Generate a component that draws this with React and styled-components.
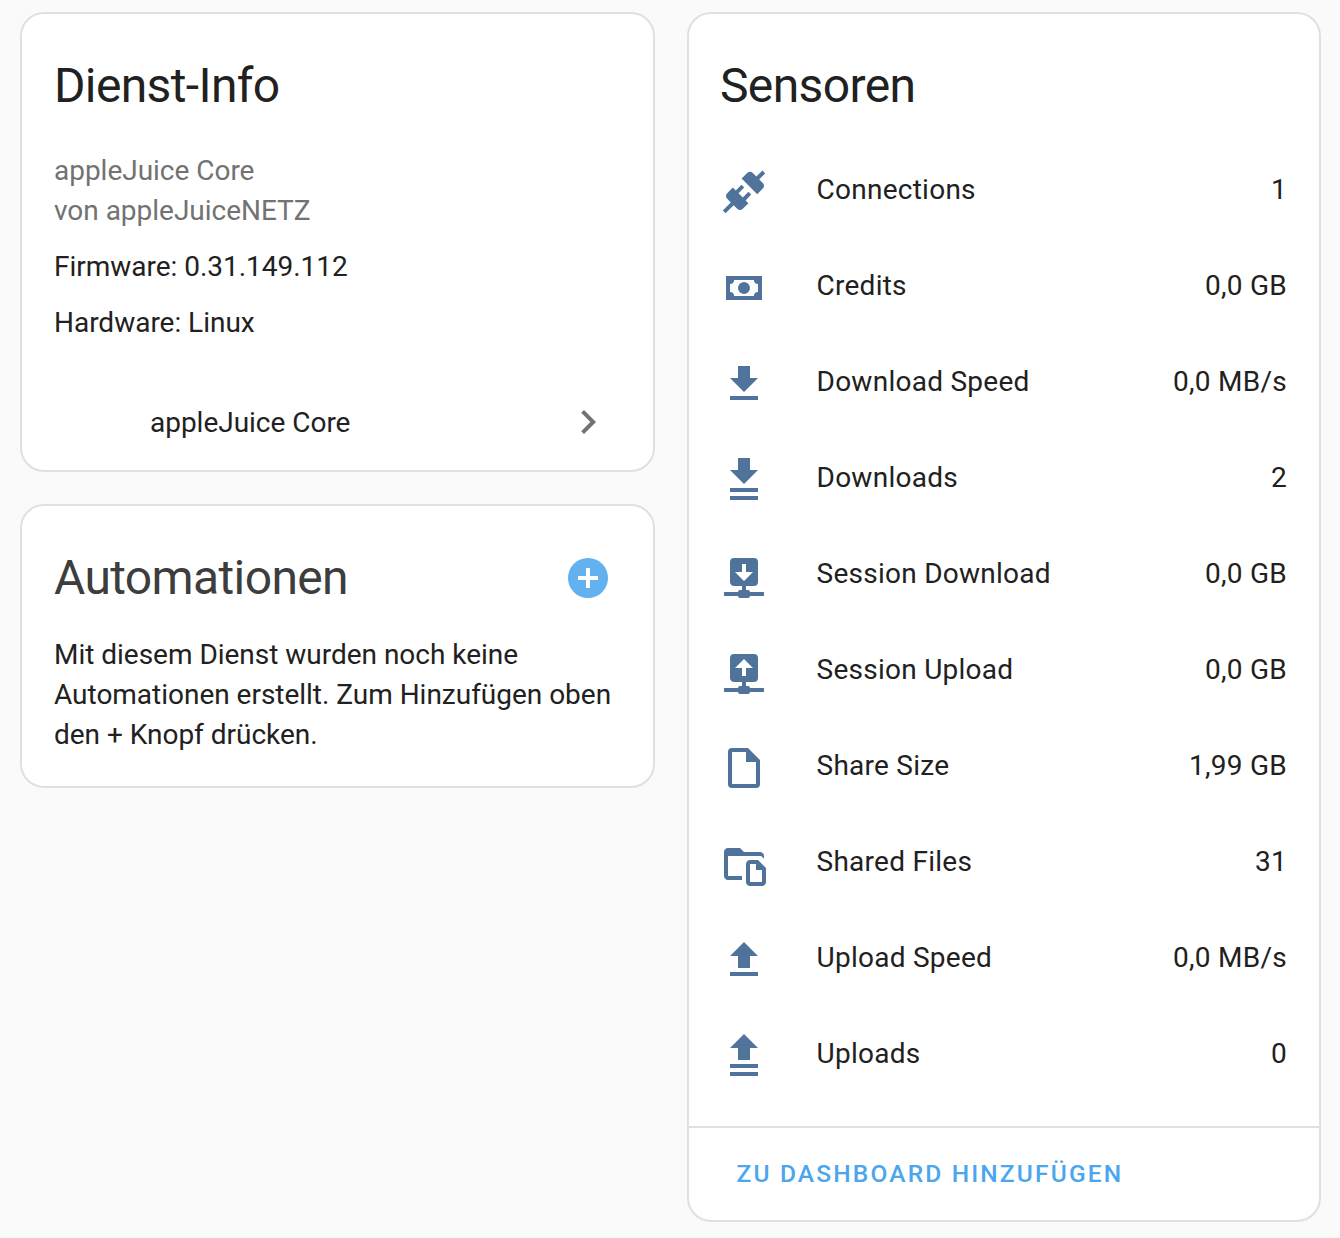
import React from "react";
import styled, { createGlobalStyle } from "styled-components";

const GlobalStyle = createGlobalStyle`
  *, *::before, *::after { box-sizing: border-box; }
  body {
    margin: 0;
    background: #fafafa;
    color: #212121;
    font-family: Roboto, "Noto Sans", sans-serif;
    font-size: 28px;
    line-height: 40px;
    letter-spacing: -0.02px;
    -webkit-font-smoothing: antialiased;
  }
`;

const Page = styled.main`
  display: flex;
  align-items: flex-start;
  gap: 32px;
  width: 1340px;
  min-height: 1238px;
  padding: 12px 19px 16px 20px;
`;

const Column = styled.div`
  display: flex;
  flex-direction: column;
  gap: 32px;
  width: ${(p) => p.$width}px;
`;

const Card = styled.section`
  display: flex;
  flex-direction: column;
  height: ${(p) => p.$height}px;
  background: #fff;
  border: 2px solid #e0e0e0;
  border-radius: 24px;
`;

const CardHeader = styled.header`
  display: flex;
  align-items: center;
  justify-content: space-between;
  height: 144px;
  padding: 0 41px 0 ${(p) => p.$inset || 32}px;
  opacity: ${(p) => (p.$dimmed ? 0.87 : 1)};
`;

const Title = styled.h1`
  margin: 0;
  font-size: 48px;
  font-weight: 400;
  line-height: 96px;
  letter-spacing: -0.63px;
`;

const InfoBody = styled.div`
  display: flex;
  flex-direction: column;
  gap: 16px;
  padding: 0 32px;
  margin-top: -7px;
`;

const Manufacturer = styled.div`
  color: #727272;
`;

const DeviceLink = styled.a`
  display: flex;
  align-items: center;
  justify-content: space-between;
  height: 96px;
  margin-top: 31px;
  padding: 0 41px 0 128px;
`;

const DeviceName = styled.span`
  padding-top: 2px;
`;

const BodyText = styled.p`
  margin: -15px 0 0;
  padding: 0 32px;
`;

const IconButton = styled.button`
  display: flex;
  padding: 0;
  border: 0;
  background: none;
  color: #4ba6ee;
`;

const Svg = styled.svg`
  flex: none;
  width: 48px;
  height: 48px;
  fill: currentColor;
  color: ${(p) => p.$color || "inherit"};
`;

const SensorList = styled.ul`
  display: flex;
  flex-direction: column;
  flex: 1;
  margin: 0;
  padding: 0 32px 0 31px;
  list-style: none;
`;

const SensorRow = styled.li`
  display: flex;
  align-items: center;
  height: 96px;
  margin-top: ${(p) => (p.$first ? "-14px" : 0)};
  letter-spacing: 0.26px;
`;

const SensorName = styled.span`
  flex: 1;
  margin: -4px 0 0 48.5px;
`;

const SensorValue = styled.span`
  margin-top: -4px;
`;

const CardActions = styled.footer`
  display: flex;
  align-items: center;
  height: 94px;
  padding: 0 47.5px;
  border-top: 2px solid #e0e0e0;
`;

const TextButton = styled.button`
  padding: 0;
  border: 0;
  background: none;
  color: #4ba6ee;
  font: 500 24.5px/36px Roboto, "Noto Sans", sans-serif;
  letter-spacing: 2.17px;
  text-transform: uppercase;
`;

const icons = {
  connection:
    "M21.4 7.5C22.2 8.3 22.2 9.6 21.4 10.3L18.6 13.1L10.8 5.3L13.6 2.5C14.4 1.7 15.7 1.7 16.4 2.5L18.2 4.3L21.2 1.3L22.6 2.7L19.6 5.7L21.4 7.5M15.6 13.3L14.2 11.9L11.4 14.7L9.3 12.6L12.1 9.8L10.7 8.4L7.9 11.2L6.4 9.8L3.6 12.6C2.8 13.4 2.8 14.7 3.6 15.4L5.4 17.2L1.4 21.2L2.8 22.6L6.8 18.6L8.6 20.4C9.4 21.2 10.7 21.2 11.4 20.4L14.2 17.6L12.8 16.2L15.6 13.3Z",
  cash: "M3,6H21V18H3V6M12,9A3,3 0 0,1 15,12A3,3 0 0,1 12,15A3,3 0 0,1 9,12A3,3 0 0,1 12,9M7,8A2,2 0 0,1 5,10V14A2,2 0 0,1 7,16H17A2,2 0 0,1 19,14V10A2,2 0 0,1 17,8H7Z",
  download: "M5,20H19V18H5M19,9H15V3H9V9H5L12,16L19,9Z",
  downloadMultiple: "M9,1V7H5L12,14L19,7H15V1H9M5,16V18H19V16H5M5,20V22H19V20H5Z",
  downloadNetwork:
    "M17,3A2,2 0 0,1 19,5V15A2,2 0 0,1 17,17H13V19H14A1,1 0 0,1 15,20H22V22H15A1,1 0 0,1 14,23H10A1,1 0 0,1 9,22H2V20H9A1,1 0 0,1 10,19H11V17H7C5.89,17 5,16.1 5,15V5A2,2 0 0,1 7,3H17M12,14.5L16.5,10H13V6H11V10H7.5L12,14.5Z",
  uploadNetwork:
    "M17,3A2,2 0 0,1 19,5V15A2,2 0 0,1 17,17H13V19H14A1,1 0 0,1 15,20H22V22H15A1,1 0 0,1 14,23H10A1,1 0 0,1 9,22H2V20H9A1,1 0 0,1 10,19H11V17H7C5.89,17 5,16.1 5,15V5A2,2 0 0,1 7,3H17M12,5.5L7.5,10H11V14H13V10H16.5L12,5.5Z",
  file: "M14,2H6A2,2 0 0,0 4,4V20A2,2 0 0,0 6,22H18A2,2 0 0,0 20,20V8L14,2M18,20H6V4H13V9H18V20Z",
  folderFile:
    "M4 18H11V20H4C2.9 20 2 19.11 2 18V6C2 4.89 2.89 4 4 4H10L12 6H20C21.1 6 22 6.89 22 8V9.4L20.6 8H4V18M23 14V21C23 22.11 22.11 23 21 23H15C13.9 23 13 22.11 13 21V12C13 10.9 13.9 10 15 10H19L23 14M21 15H18V12H15V21H21V15Z",
  upload: "M9,16V10H5L12,3L19,10H15V16H9M5,20V18H19V20H5Z",
  uploadMultiple: "M9,14V8H5L12,1L19,8H15V14H9M5,16V18H19V16H5M5,20V22H19V20H5Z",
  chevronRight: "M8.59,16.58L13.17,12L8.59,7.41L10,6L16,12L10,18L8.59,16.58Z",
  plusCircle:
    "M17,13H13V17H11V13H7V11H11V7H13V11H17M12,2A10,10 0 0,0 2,12A10,10 0 0,0 12,22A10,10 0 0,0 22,12A10,10 0 0,0 12,2Z",
};

function Icon({ name, color }) {
  return (
    <Svg viewBox="0 0 24 24" $color={color} aria-hidden="true">
      <path d={icons[name]} />
    </Svg>
  );
}

const sensors = [
  { icon: "connection", name: "Connections", value: "1" },
  { icon: "cash", name: "Credits", value: "0,0 GB" },
  { icon: "download", name: "Download Speed", value: "0,0 MB/s" },
  { icon: "downloadMultiple", name: "Downloads", value: "2" },
  { icon: "downloadNetwork", name: "Session Download", value: "0,0 GB" },
  { icon: "uploadNetwork", name: "Session Upload", value: "0,0 GB" },
  { icon: "file", name: "Share Size", value: "1,99 GB" },
  { icon: "folderFile", name: "Shared Files", value: "31" },
  { icon: "upload", name: "Upload Speed", value: "0,0 MB/s" },
  { icon: "uploadMultiple", name: "Uploads", value: "0" },
];

export default function App() {
  return (
    <>
      <GlobalStyle />
      <Page>
        <Column $width={635}>
          <Card $height={460}>
            <CardHeader>
              <Title>Dienst-Info</Title>
            </CardHeader>
            <InfoBody>
              <Manufacturer>
                <div>appleJuice Core</div>
                <div>von appleJuiceNETZ</div>
              </Manufacturer>
              <div>Firmware: 0.31.149.112</div>
              <div>Hardware: Linux</div>
            </InfoBody>
            <DeviceLink>
              <DeviceName>appleJuice Core</DeviceName>
              <Icon name="chevronRight" color="#727272" />
            </DeviceLink>
          </Card>
          <Card $height={284}>
            <CardHeader $dimmed>
              <Title>Automationen</Title>
              <IconButton aria-label="Hinzufügen">
                <Icon name="plusCircle" />
              </IconButton>
            </CardHeader>
            <BodyText>
              Mit diesem Dienst wurden noch keine Automationen erstellt. Zum
              Hinzufügen oben den + Knopf drücken.
            </BodyText>
          </Card>
        </Column>
        <Column $width={634}>
          <Card $height={1210}>
            <CardHeader $inset={31}>
              <Title>Sensoren</Title>
            </CardHeader>
            <SensorList>
              {sensors.map((s, i) => (
                <SensorRow key={s.name} $first={i === 0}>
                  <Icon name={s.icon} color="#50739c" />
                  <SensorName>{s.name}</SensorName>
                  <SensorValue>{s.value}</SensorValue>
                </SensorRow>
              ))}
            </SensorList>
            <CardActions>
              <TextButton>Zu Dashboard hinzufügen</TextButton>
            </CardActions>
          </Card>
        </Column>
      </Page>
    </>
  );
}
